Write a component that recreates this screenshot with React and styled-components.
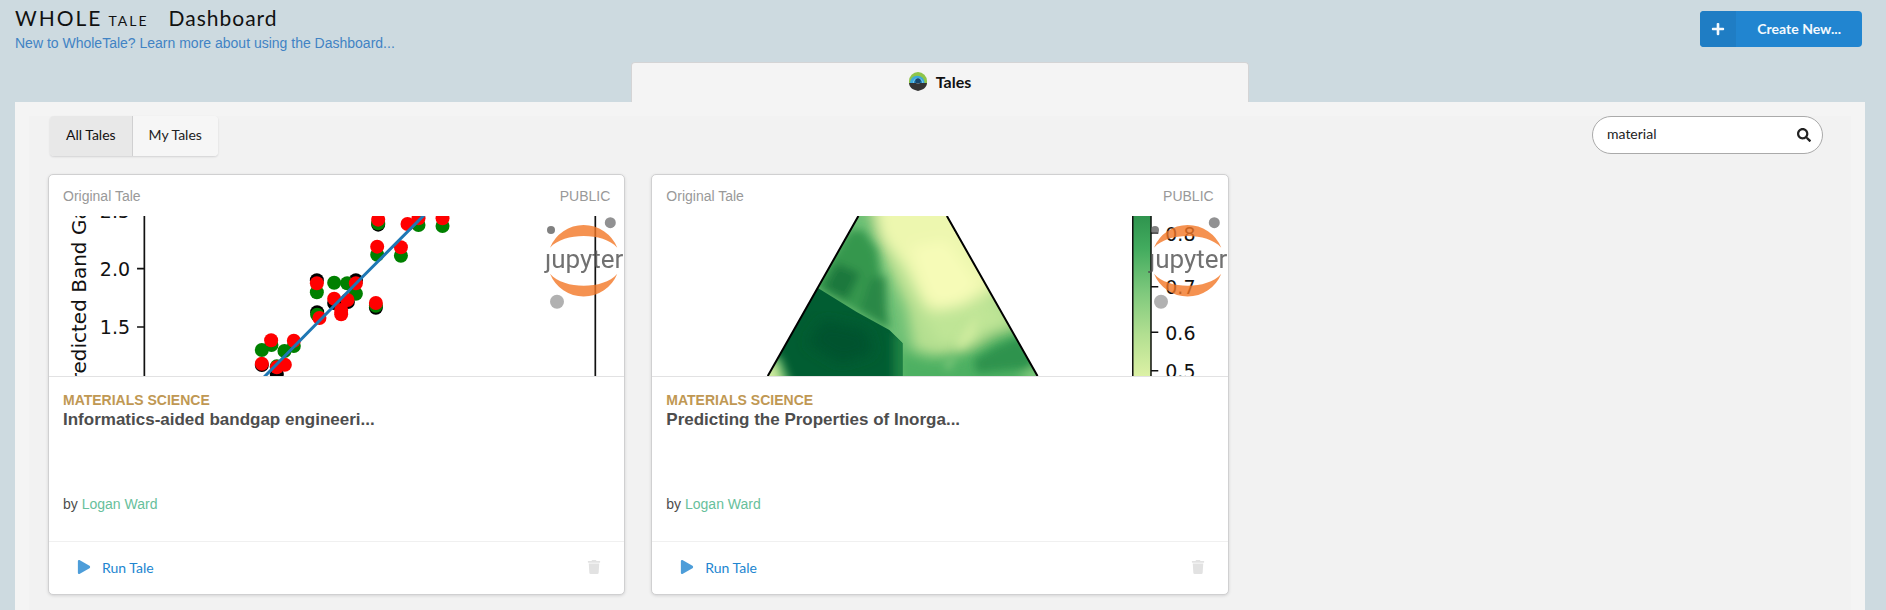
import React from "react";
import styled, { createGlobalStyle } from "styled-components";
import { FaPlay, FaPlus, FaSearch, FaTrash } from "react-icons/fa";

const sans = '"Liberation Sans", Arial, sans-serif';
const lato = 'Lato, "Liberation Sans", sans-serif';

const GlobalStyle = createGlobalStyle`
  *, *::before, *::after { box-sizing: border-box; }
  body {
    margin: 0;
    background: #cddae0;
    font: 14px/20px ${sans};
    color: #4d4d4d;
  }
  a { text-decoration: none; }
  button, input { font-family: ${lato}; font-size: 14px; }
`;

const Page = styled.div`
  display: flex;
  flex-direction: column;
  min-height: 100vh;
  overflow-x: hidden;
`;

const Header = styled.header`
  display: flex;
  justify-content: space-between;
  align-items: flex-start;
  height: 62px;
  padding: 8px 24px 0 15px;
`;

const Heading = styled.h1`
  display: flex;
  align-items: baseline;
  margin: 0;
  font: 400 21px/24px ${lato};
  letter-spacing: 1px;
  color: #111;
`;

const Brand = styled.span`
  letter-spacing: 2px;
`;

const BrandMinor = styled.small`
  margin: 0 20px 0 6px;
  font-size: 14px;
  letter-spacing: 2px;
`;

const HelpLink = styled.a`
  display: block;
  color: #4183c4;
`;

const Intro = styled.div`
  margin-top: -2px;
`;

const CreateButton = styled.button`
  display: flex;
  align-items: center;
  height: 36px;
  margin-top: 3px;
  padding: 0;
  border: 0;
  border-radius: 4px;
  overflow: hidden;
  background: #2185d0;
  color: #f4f9fd;
  font-weight: 700;
`;

const CreateIcon = styled.span`
  display: grid;
  place-items: center;
  width: 36px;
  height: 36px;
  background: #1f7dc4;
`;

const CreateLabel = styled.span`
  padding: 0 21px 2px;
`;

const TabBar = styled.nav`
  display: grid;
  grid-template-columns: 1fr 1fr 1fr;
  height: 40px;
  margin: 0 21px 0 15px;
`;

const Tab = styled.a`
  grid-column: 2;
  display: flex;
  justify-content: center;
  align-items: center;
  gap: 9px;
  margin: 0 -1px;
  padding-bottom: 2px;
  border: 1px solid #d4d4d5;
  border-bottom: 0;
  border-radius: 4px 4px 0 0;
  background: #f4f4f4;
  color: #111;
  font: 700 16px/20px ${lato};
`;

const Panel = styled.main`
  flex: 1;
  display: flex;
  margin: 0 21px 0 15px;
  padding: 14px 14px 0;
  background: #f4f4f4;
`;

const Content = styled.div`
  flex: 1;
  padding: 0 19px 14px;
  background: #f2f2f2;
`;

const Toolbar = styled.div`
  display: flex;
  justify-content: space-between;
  align-items: flex-start;
  margin-bottom: 18px;
  padding: 0 9px 0 2px;
`;

const Filters = styled.div`
  display: flex;
  height: 40px;
  border-radius: 4px;
  overflow: hidden;
  box-shadow: 0 1px 2px rgba(34, 36, 38, 0.15);
`;

const FilterButton = styled.button`
  padding: 0 16px 3px;
  border: 0;
  border-right: ${(p) => (p.$active ? "1px solid #d0d0d1" : "0")};
  background: ${(p) => (p.$active ? "#e8e8e8" : "#f6f6f6")};
  color: ${(p) => (p.$active ? "#111" : "#222")};
`;

const SearchBox = styled.label`
  display: flex;
  align-items: center;
  width: 231px;
  height: 38px;
  padding: 0 11px 0 14px;
  border: 1px solid #aaa;
  border-radius: 19px;
  background: #fff;
  color: #222;
`;

const SearchInput = styled.input`
  flex: 1;
  min-width: 0;
  padding: 0 0 3px;
  border: 0;
  outline: 0;
  background: transparent;
  color: #222;
`;

const CardGrid = styled.div`
  display: grid;
  grid-template-columns: repeat(3, minmax(0, 1fr));
  gap: 26px;
`;

const Card = styled.article`
  border: 1px solid #d0d0d1;
  border-radius: 5px;
  overflow: hidden;
  background: #fff;
  box-shadow: 0 1px 3px #d4d4d5;
`;

const CardMeta = styled.div`
  display: flex;
  justify-content: space-between;
  padding: 11px 14px 10px;
  color: #999;
`;

const Figure = styled.div`
  position: relative;
  height: 160px;
  overflow: hidden;
`;

const Scene = styled.svg`
  display: block;
  width: 100%;
  height: 160px;
`;

const LogoOverlay = styled.svg`
  position: absolute;
  top: 0;
  right: 0;
  opacity: 0.8;
`;

const CardBody = styled.div`
  display: flex;
  flex-direction: column;
  justify-content: space-between;
  height: 165px;
  padding: 13px 14px 27px;
  border-top: 1px solid #e2e2e3;
`;

const Category = styled.div`
  color: #c09853;
  font-weight: 700;
`;

const Title = styled.h2`
  margin: 0;
  font-size: 17px;
  line-height: 20px;
  color: #4d4d4d;
`;

const AuthorLink = styled.a`
  color: #67c09b;
`;

const CardFooter = styled.div`
  display: flex;
  justify-content: space-between;
  align-items: center;
  height: 53px;
  padding: 0 23px 2px 28px;
  border-top: 1px solid #f0f0f0;
`;

const RunButton = styled.button`
  display: flex;
  align-items: center;
  gap: 11px;
  padding: 0;
  border: 0;
  background: none;
  color: #2185d0;
  svg { opacity: 0.8; }
`;

const DeleteButton = styled.button`
  display: flex;
  padding: 0;
  border: 0;
  background: none;
  color: #e2e2e2;
`;

function TalesLogo() {
  return (
    <svg width="18" height="19" viewBox="0 0 18 19" aria-hidden="true">
      <path d="M0 10.500V9a9 9 0 0 1 18 0v2H0z" fill="#8fc54a" />
      <path d="M1 11a7.300 7.300 0 1 1 14.600 0z" fill="#3ca9dc" />
      <path d="M4 11a5 5 0 1 1 10 0z" fill="#8accea" />
      <path d="M4.800 11a4.200 4.200 0 1 1 8.400 0z" fill="#2385c0" />
      <circle cx="9" cy="9" r="2.700" fill="#17456b" />
      <path d="M0 11h7l2 1 2-1h7c0 3-2.500 6-6 7l-3 1-3-1c-3.500-1-6-4-6-7z" fill="#343434" />
    </svg>
  );
}

function JupyterLogo({ id }) {
  return (
    <LogoOverlay width="80" height="94" viewBox="0 0 80 94" role="img" aria-label="Jupyter">
      <clipPath id={id}>
        <path d="M-4 38H9V30H80V64H-4z" />
      </clipPath>
      <circle cx="7" cy="14" r="4" fill="#616161" />
      <circle cx="66.300" cy="6.700" r="5.500" fill="#767677" />
      <circle cx="13" cy="85.700" r="7" fill="#9e9e9e" />
      <path d="M6 31.700A36.300 36.300 0 0 1 73.300 31.700C66 23.500 53 20 39.700 20S13.500 23.500 6 31.700z" fill="#f37726" />
      <path d="M6 57.700A36.300 36.300 0 0 0 73.300 57.700C66 66 53 69.700 39.700 69.700S13.500 66 6 57.700z" fill="#f37726" />
      <text x="1" y="52" fontFamily="Roboto, sans-serif" fontSize="26" fill="#4e4e4e" clipPath={`url(#${id})`}>
        jupyter
      </text>
    </LogoOverlay>
  );
}

const points = [
  { fill: "#000", at: [[267.7, 64.3], [268, 96.3], [285, 87], [298.7, 86], [306.7, 64.3], [212.7, 149], [227.7, 158], [326.7, 91.7], [329, 8.7]] },
  { fill: "#008000", at: [[267.7, 76.3], [268, 98.7], [285, 66.7], [298, 67.3], [306.7, 77.7], [212.7, 134], [222.3, 129], [235.3, 135], [244.7, 130], [227.7, 150.3], [326.7, 89.7], [329, 7.3], [328, 38.7], [351.7, 39.7], [369.3, 9], [393.3, 10]] },
  { fill: "#f00", at: [[267.7, 67.3], [270.3, 102], [285, 82.7], [292, 98.3], [292, 94], [298.3, 84], [306.7, 67.3], [222, 124.3], [244.7, 124.7], [212.7, 147.7], [227.7, 151.3], [235.7, 148.7], [326.7, 87], [329, 3.7], [328, 30.7], [351.7, 31.3], [358.3, 8], [369.3, 2.3], [393.3, 2.3]] },
];

function BandGapPlot() {
  return (
    <Scene viewBox="0 0 575 160" preserveAspectRatio="xMidYMid slice" role="img" aria-label="Predicted band gap plot">
      <path d="M95.300 0V160M546 0V160M88 52.700H95M88 111H95" stroke="#111" strokeWidth="1.700" />
      <g fontFamily="DejaVu Sans, sans-serif" fontSize="19" fill="#111" textAnchor="end">
        <text x="81" y="2">2.5</text>
        <text x="81" y="60">2.0</text>
        <text x="81" y="118">1.5</text>
      </g>
      <text transform="translate(37 177) rotate(-90)" fontFamily="DejaVu Sans, sans-serif" fontSize="20" fill="#111">
        Predicted Band Gap
      </text>
      {points.map(({ fill, at }) => (
        <g key={fill} fill={fill}>
          {at.map(([x, y]) => (
            <circle key={`${x},${y}`} cx={x} cy={y} r="7" />
          ))}
        </g>
      ))}
      <path d="M214 162L311 63.300L376 -2" stroke="#1f77b4" strokeWidth="3" fill="none" />
    </Scene>
  );
}

function TernaryPlot() {
  return (
    <Scene viewBox="0 0 575 160" preserveAspectRatio="xMidYMid slice" role="img" aria-label="Ternary property map">
      <defs>
        <clipPath id="triangle">
          <path d="M206.300 0H294.700L385.300 160H115.700z" />
        </clipPath>
        <clipPath id="corner">
          <path d="M165 229L290 306L388 360L428 400V520H0V229z" />
        </clipPath>
        <filter id="wide" x="-20%" y="-20%" width="140%" height="140%">
          <feGaussianBlur stdDeviation="20" />
        </filter>
        <filter id="soft" x="-20%" y="-20%" width="140%" height="140%">
          <feGaussianBlur stdDeviation="12" />
        </filter>
        <linearGradient id="scale" x1="0" y1="0" x2="0" y2="1">
          <stop offset="0" stopColor="#2f944e" />
          <stop offset="0.200" stopColor="#42ab5e" />
          <stop offset="0.480" stopColor="#7fc97d" />
          <stop offset="0.740" stopColor="#b2df91" />
          <stop offset="1" stopColor="#dcf1a5" />
        </linearGradient>
      </defs>
      <g clipPath="url(#triangle)">
        <g transform="translate(108 -6) scale(0.333)">
          <path d="M-40 0H900V540H-40z" fill="#b4df90" />
          <g filter="url(#wide)">
            <path d="M335 -60H640L720 230L640 270L550 320L490 290L430 170L360 80z" fill="#edf7af" />
            <path d="M260 -60H325L350 60L390 190L440 300L460 420H380L150 260z" fill="#6dc074" />
            <path d="M480 310L640 280L680 260L760 360L640 400L540 400z" fill="#bfe596" />
            <path d="M450 110L560 90L660 230L620 270L550 300L500 260z" fill="#f6fbb7" />
            <path d="M400 410L520 440L620 425L700 370L780 350L900 560H400z" fill="#4db062" />
          </g>
          <g filter="url(#soft)">
            <path d="M270 60L310 60L350 120L360 190L390 360L160 230z" fill="#35974e" />
            <path d="M230 160L300 190L260 270L190 235z" fill="#1e783d" />
            <path d="M330 205L376 200L382 350L300 300z" fill="#2a8847" />
            <path d="M640 450L710 410L780 380L830 450L800 475L650 490z" fill="#2d934d" />
            <path d="M590 400L655 310L640 380L600 415z" fill="#d0ec9f" />
            <path d="M550 470L590 430L570 480z" fill="#84cb7e" />
            <path d="M770 505L830 475L840 510z" fill="#8fd084" />
          </g>
          <g clipPath="url(#corner)">
            <path d="M0 229H440V520H0z" fill="#015d32" />
            <g filter="url(#wide)">
              <path d="M190 330L320 360L340 430L240 460L140 400z" fill="#00522d" />
            </g>
            <g filter="url(#soft)">
              <path d="M400 370H460V540H400z" fill="#1f8043" />
              <path d="M0 440H60L95 530H0z" fill="#6dbd70" />
              <path d="M0 460H45L65 530H0z" fill="#cdea9f" />
            </g>
          </g>
        </g>
      </g>
      <path d="M206.300 0L115.700 160M294.700 0L385.300 160" stroke="#000" strokeWidth="2" />
      <path d="M480 0H499V160H480z" fill="url(#scale)" />
      <path d="M480.500 0V160M498.700 0V160M499 17H506M499 70.700H506M499 116.300H506M499 154.700H506" stroke="#111" strokeWidth="1.500" />
      <g fontFamily="DejaVu Sans, sans-serif" fontSize="19" fill="#111">
        <text x="513" y="25">0.8</text>
        <text x="513" y="78">0.7</text>
        <text x="513" y="124">0.6</text>
        <text x="513" y="162">0.5</text>
      </g>
    </Scene>
  );
}

const tales = [
  { id: "bandgap", title: "Informatics-aided bandgap engineeri...", Plot: BandGapPlot },
  { id: "inorganic", title: "Predicting the Properties of Inorga...", Plot: TernaryPlot },
];

function TaleCard({ id, title, Plot }) {
  return (
    <Card>
      <CardMeta>
        <span>Original Tale</span>
        <span>PUBLIC</span>
      </CardMeta>
      <Figure>
        <Plot />
        <JupyterLogo id={`${id}-word`} />
      </Figure>
      <CardBody>
        <div>
          <Category>MATERIALS SCIENCE</Category>
          <Title>{title}</Title>
        </div>
        <div>
          by <AuthorLink href="#author">Logan Ward</AuthorLink>
        </div>
      </CardBody>
      <CardFooter>
        <RunButton type="button">
          <FaPlay size={14} />
          Run Tale
        </RunButton>
        <DeleteButton type="button" aria-label="Delete tale">
          <FaTrash size={14} />
        </DeleteButton>
      </CardFooter>
    </Card>
  );
}

export default function App() {
  return (
    <Page>
      <GlobalStyle />
      <Header>
        <Intro>
          <Heading>
            <Brand>WHOLE</Brand>
            <BrandMinor>TALE</BrandMinor>
            Dashboard
          </Heading>
          <HelpLink href="#guide">New to WholeTale? Learn more about using the Dashboard...</HelpLink>
        </Intro>
        <CreateButton type="button">
          <CreateIcon>
            <FaPlus size={14} />
          </CreateIcon>
          <CreateLabel>Create New...</CreateLabel>
        </CreateButton>
      </Header>
      <TabBar>
        <Tab href="#tales">
          <TalesLogo />
          Tales
        </Tab>
      </TabBar>
      <Panel>
        <Content>
          <Toolbar>
            <Filters>
              <FilterButton type="button" $active>All Tales</FilterButton>
              <FilterButton type="button">My Tales</FilterButton>
            </Filters>
            <SearchBox>
              <SearchInput type="text" aria-label="Search tales" defaultValue="material" />
              <FaSearch size={14} />
            </SearchBox>
          </Toolbar>
          <CardGrid>
            {tales.map((tale) => (
              <TaleCard key={tale.id} {...tale} />
            ))}
          </CardGrid>
        </Content>
      </Panel>
    </Page>
  );
}
